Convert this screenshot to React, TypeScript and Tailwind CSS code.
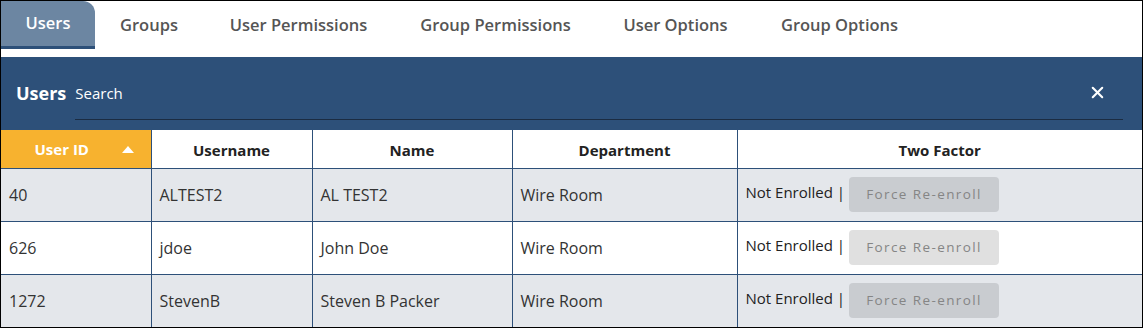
import { X } from 'lucide-react'

const tabs = [
  { label: 'Users', w: 'w-[94px]' },
  { label: 'Groups', w: 'w-[108px]' },
  { label: 'User Permissions', w: 'w-[191px]' },
  { label: 'Group Permissions', w: 'w-[203px]' },
  { label: 'User Options', w: 'w-[157px]' },
  { label: 'Group Options', w: 'w-[171px]' },
]

const users = [
  { id: '40', username: 'ALTEST2', name: 'AL TEST2', dept: 'Wire Room' },
  { id: '626', username: 'jdoe', name: 'John Doe', dept: 'Wire Room' },
  { id: '1272', username: 'StevenB', name: 'Steven B Packer', dept: 'Wire Room' },
]

export default function App() {
  return (
    <div className="w-[1143px] h-[328px] border border-black bg-white font-['Open_Sans',sans-serif] overflow-hidden">
      {/* Tabs */}
      <div className="flex h-[48px]">
        {tabs.map((t, i) => (
          <div key={t.label}
            className={`${t.w} h-[48px] flex items-center justify-center text-[16.5px] font-semibold ${
              i === 0
                ? 'bg-[#6c86a2] text-white rounded-tr-[12px] border-b-[3px] border-[#2d5079]'
                : 'text-[#555]'
            }`}>
            {t.label}
          </div>
        ))}
      </div>

      {/* Panel */}
      <div className="mt-[8px] bg-[#2d5079]">
        <div className="h-[73px] flex items-center pl-[15px] pr-[19px] relative">
          <span className="text-white text-[18px] font-bold">Users</span>
          <div className="ml-[9px] flex-1 self-stretch flex items-center border-b border-[#1b2c42] mb-[10px] mt-[10px]">
            <span className="text-white text-[15px]">Search</span>
          </div>
          <X className="absolute right-[35px] top-[26px] text-white" size={19} strokeWidth={2.6} />
        </div>

        <table className="w-full border-collapse table-fixed text-[16px] text-[#333]">
          <colgroup>
            <col className="w-[150px]" />
            <col className="w-[161px]" />
            <col className="w-[200px]" />
            <col className="w-[225px]" />
            <col />
          </colgroup>
          <thead>
            <tr className="h-[38px] text-[15px]">
              <th className="bg-[#f7b22f] text-white font-bold border-b border-r border-[#2d5079] relative">
                <span className="mr-[28px]">User ID</span>
                <span className="absolute right-[17px] top-[16px] w-0 h-0 border-l-[6px] border-r-[6px] border-b-[7px] border-l-transparent border-r-transparent border-b-white" />
              </th>
              <th className="bg-white font-bold text-[#222] border border-[#2d5079] border-t-0 pt-[3px]">Username</th>
              <th className="bg-white font-bold text-[#222] border border-[#2d5079] border-t-0 pt-[3px]">Name</th>
              <th className="bg-white font-bold text-[#222] border border-[#2d5079] border-t-0 pt-[3px]">Department</th>
              <th className="bg-white font-bold text-[#222] border border-[#2d5079] border-t-0 border-r-0 pt-[3px]">Two Factor</th>
            </tr>
          </thead>
          <tbody>
            {users.map((u, i) => (
              <tr key={u.id} className={`h-[53px] ${i % 2 === 0 ? 'bg-[#e4e7eb]' : 'bg-white'}`}>
                <td className="px-[8px] border-b border-r border-[#2d5079]">{u.id}</td>
                <td className="px-[8px] border border-t-0 border-[#2d5079]">{u.username}</td>
                <td className="px-[8px] border border-t-0 border-[#2d5079]">{u.name}</td>
                <td className="px-[8px] border border-t-0 border-[#2d5079]">{u.dept}</td>
                <td className="px-[8px] border-b border-l border-[#2d5079]">
                  <div className="flex items-center">
                    <span className="text-[#222] text-[15px] -mt-[4px]">Not Enrolled |</span>
                    <button className={`ml-[4px] w-[150px] h-[35px] rounded-[4px] text-[13.5px] tracking-[1.4px] text-[#858585] ${
                      i % 2 === 0 ? 'bg-[#c9ccd0]' : 'bg-[#e0e0e0]'
                    }`}>
                      Force Re-enroll
                    </button>
                  </div>
                </td>
              </tr>
            ))}
          </tbody>
        </table>
      </div>
    </div>
  )
}
